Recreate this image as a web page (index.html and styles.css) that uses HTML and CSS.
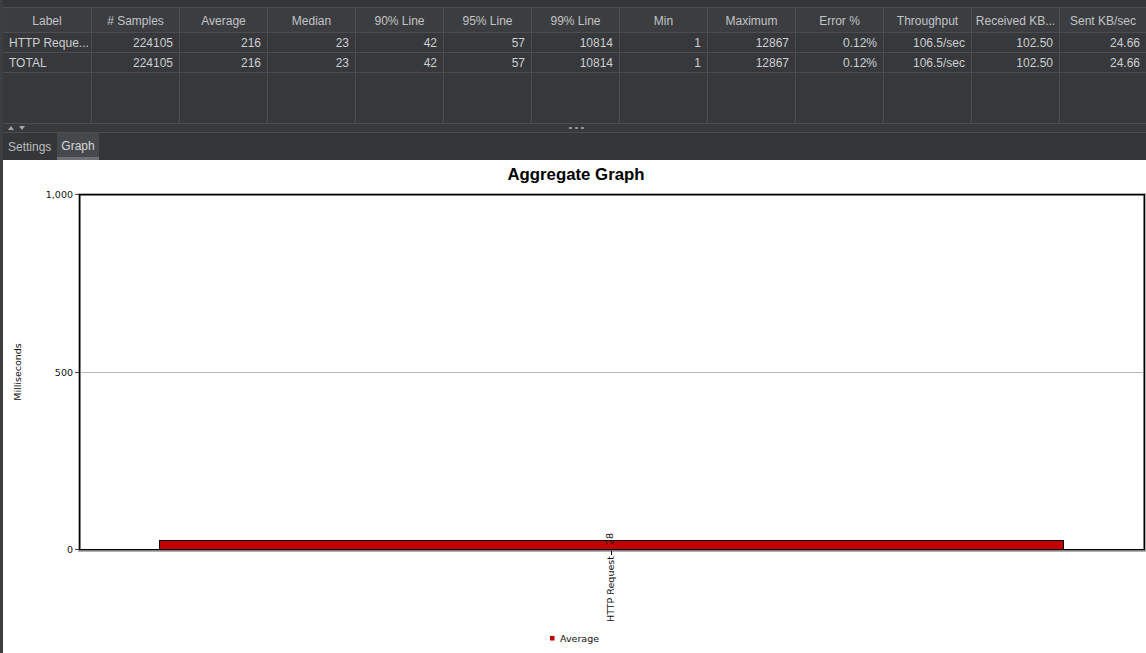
FILE: index.html
```html
<!DOCTYPE html>
<html>
<head>
<meta charset="utf-8">
<link rel="stylesheet" href="styles.css">
</head>
<body>
<div class="window">
  <div class="main">
    <div class="topstrip"></div>
    <div class="table">
      <div class="cell head">Label</div>
      <div class="cell head"># Samples</div>
      <div class="cell head">Average</div>
      <div class="cell head">Median</div>
      <div class="cell head">90% Line</div>
      <div class="cell head">95% Line</div>
      <div class="cell head">99% Line</div>
      <div class="cell head">Min</div>
      <div class="cell head">Maximum</div>
      <div class="cell head">Error %</div>
      <div class="cell head">Throughput</div>
      <div class="cell head">Received KB...</div>
      <div class="cell head">Sent KB/sec</div>

      <div class="cell data left">HTTP Reque...</div>
      <div class="cell data">224105</div>
      <div class="cell data">216</div>
      <div class="cell data">23</div>
      <div class="cell data">42</div>
      <div class="cell data">57</div>
      <div class="cell data">10814</div>
      <div class="cell data">1</div>
      <div class="cell data">12867</div>
      <div class="cell data">0.12%</div>
      <div class="cell data">106.5/sec</div>
      <div class="cell data">102.50</div>
      <div class="cell data">24.66</div>

      <div class="cell data left">TOTAL</div>
      <div class="cell data">224105</div>
      <div class="cell data">216</div>
      <div class="cell data">23</div>
      <div class="cell data">42</div>
      <div class="cell data">57</div>
      <div class="cell data">10814</div>
      <div class="cell data">1</div>
      <div class="cell data">12867</div>
      <div class="cell data">0.12%</div>
      <div class="cell data">106.5/sec</div>
      <div class="cell data">102.50</div>
      <div class="cell data">24.66</div>

      <div class="cell fill"></div>
      <div class="cell fill"></div>
      <div class="cell fill"></div>
      <div class="cell fill"></div>
      <div class="cell fill"></div>
      <div class="cell fill"></div>
      <div class="cell fill"></div>
      <div class="cell fill"></div>
      <div class="cell fill"></div>
      <div class="cell fill"></div>
      <div class="cell fill"></div>
      <div class="cell fill"></div>
      <div class="cell fill"></div>
    </div>
    <div class="splitter">
      <div class="arrows"><span class="tri up"></span><span class="tri down"></span></div>
      <div class="dots"><span></span><span></span><span></span></div>
    </div>
    <div class="tabs">
      <div class="tab">Settings</div>
      <div class="tab active">Graph</div>
    </div>
    <div class="chart">
      <svg class="chart-svg" width="1143" height="493" viewBox="0 0 1143 493">
        <text class="title" x="573" y="20" text-anchor="middle">Aggregate Graph</text>
        <rect x="75.5" y="33.5" width="1067" height="358" fill="none" stroke="#b0b0b0" stroke-width="1"/>
        <rect x="76.75" y="34.75" width="1064.5" height="355" fill="#ffffff" stroke="#000000" stroke-width="1.5"/>
        <line x1="78" y1="212.5" x2="1140" y2="212.5" stroke="#b8b8b8" stroke-width="1"/>
        <line x1="72" y1="34.5" x2="76" y2="34.5" stroke="#444" stroke-width="1"/>
        <line x1="72" y1="212.5" x2="76" y2="212.5" stroke="#444" stroke-width="1"/>
        <line x1="72" y1="389.5" x2="76" y2="389.5" stroke="#444" stroke-width="1"/>
        <text class="axis" x="70" y="37.5" text-anchor="end">1,000</text>
        <text class="axis" x="70" y="215.5" text-anchor="end">500</text>
        <text class="axis" x="70" y="392.5" text-anchor="end">0</text>
        <text class="axis" transform="translate(17.5,212) rotate(-90)" text-anchor="middle">Milliseconds</text>
        <rect x="156.5" y="380.5" width="904" height="9" fill="#c40000" stroke="#000000" stroke-width="1"/>
        <line x1="608.5" y1="391" x2="608.5" y2="395" stroke="#000" stroke-width="1"/>
        <text class="axis" transform="translate(610,385) rotate(-90)">28</text>
        <text class="axis" transform="translate(611.3,462) rotate(-90)">HTTP Request</text>
        <rect x="547" y="476" width="4.5" height="4.5" fill="#c40000"/>
        <text class="axis" x="557" y="482">Average</text>
      </svg>
    </div>
  </div>
</div>
</body>
</html>
```

FILE: styles.css
```css
html, body {
  margin: 0;
  padding: 0;
}
body {
  width: 1146px;
  height: 653px;
  overflow: hidden;
  background: #353638;
  font-family: "Liberation Sans", Arial, sans-serif;
}
.window {
  display: flex;
  height: 653px;
  border-left: 3px solid #3d3e40;
  box-sizing: border-box;
}
.main {
  flex: 1;
  display: flex;
  flex-direction: column;
  min-width: 0;
}
.topstrip {
  height: 7px;
  background: #333537;
}
.table {
  display: grid;
  grid-template-columns: 89px repeat(11, 88px) 1fr;
  grid-template-rows: 25px 20px 20px 50px;
  border-top: 1px solid #4b4d50;
  background: #36383b;
}
.cell {
  box-sizing: border-box;
  border-right: 1px solid #4b4d50;
  font-size: 12px;
  white-space: nowrap;
  overflow: hidden;
}
.cell:nth-child(13n) {
  border-right: none;
}
.head {
  background: #3b3d40;
  color: #c2c4c6;
  text-align: center;
  line-height: 24px;
  padding-top: 1px;
  border-bottom: 1px solid #4b4d50;
}
.data {
  color: #cdcfd1;
  text-align: right;
  padding: 1px 6px 0;
  line-height: 18px;
  border-bottom: 1px solid #4b4d50;
}
.data.left {
  text-align: left;
}
.fill {
  background: #36383b;
}
.splitter {
  height: 8px;
  border-top: 1px solid #4b4d50;
  border-bottom: 1px solid #4b4d50;
  background: #37393c;
  display: flex;
  align-items: center;
  position: relative;
}
.arrows {
  display: flex;
  gap: 5px;
  padding-left: 5px;
}
.tri {
  width: 0;
  height: 0;
  border-left: 3.5px solid transparent;
  border-right: 3.5px solid transparent;
}
.tri.up {
  border-bottom: 4px solid #a4a6a8;
}
.tri.down {
  border-top: 4px solid #a4a6a8;
}
.dots {
  position: absolute;
  left: 566px;
  top: 3px;
  display: flex;
  gap: 3px;
}
.dots span {
  width: 3px;
  height: 2px;
  border-radius: 1px;
  background: #a0a2a4;
}
.tabs {
  height: 27px;
  display: flex;
  background: #353638;
}
.tab {
  padding: 1px 5px 0;
  font-size: 12px;
  line-height: 26px;
  color: #bbbdbf;
  box-sizing: border-box;
  height: 27px;
  width: 54px;
}
.tab.active {
  width: 42px;
  text-align: center;
  padding: 2px 0 0;
  background: #46494c;
  color: #d6d8da;
  border-bottom: 3px solid #6c6f73;
  line-height: 22px;
}
.chart {
  flex: 1;
  background: #ffffff;
  overflow: hidden;
}
.chart-svg {
  display: block;
}
.title {
  font-family: "Liberation Sans", Arial, sans-serif;
  font-weight: bold;
  font-size: 16.8px;
  fill: #000;
}
.axis {
  font-family: "DejaVu Sans", sans-serif;
  font-size: 9.5px;
  fill: #111;
}
```
